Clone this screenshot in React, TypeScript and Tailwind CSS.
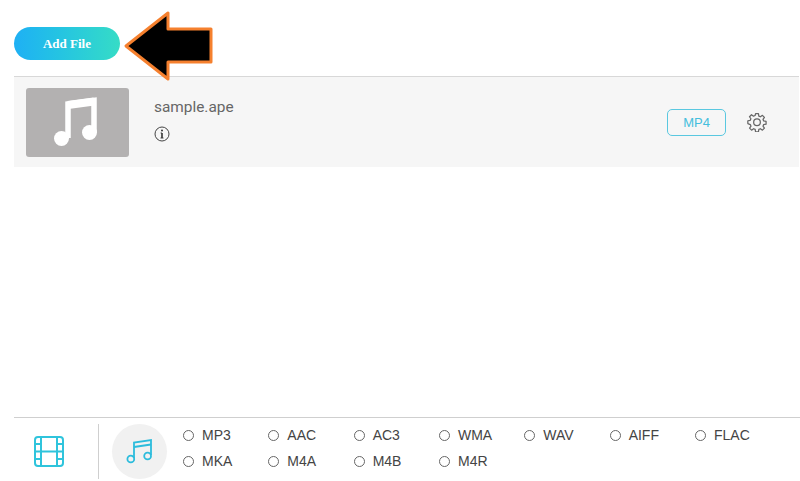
const formats = ['MP3', 'AAC', 'AC3', 'WMA', 'WAV', 'AIFF', 'FLAC', 'MKA', 'M4A', 'M4B', 'M4R'];

function Arrow() {
  return (
    <svg className="absolute left-[120px] top-[8px]" width="100" height="76" viewBox="120 8 100 76">
      <path d="M126 46 L168 13 L168 29 L211 29 L211 62 L168 62 L168 79 Z" fill="#000" stroke="#f5802e" strokeWidth="3" strokeLinejoin="round" />
    </svg>
  );
}

function NoteThumb() {
  return (
    <svg width="50" height="52" viewBox="0 0 50 52" fill="none">
      <path d="M15 42 V8 L41 4.5 V36" stroke="#fff" strokeWidth="5.5" />
      <path d="M15 9 L41 5.5" stroke="#fff" strokeWidth="8" />
      <circle cx="8.5" cy="42.5" r="7.5" fill="#fff" />
      <circle cx="36.5" cy="36.5" r="7.5" fill="#fff" />
    </svg>
  );
}

function InfoIcon() {
  return (
    <svg width="16" height="16" viewBox="0 0 16 16" fill="none">
      <circle cx="8" cy="8" r="7" stroke="#444" strokeWidth="1" />
      <path d="M8 7 V12" stroke="#333" strokeWidth="1.6" />
      <path d="M6.5 12 H9.5 M6.6 7 H8" stroke="#333" strokeWidth="0.9" />
      <circle cx="8" cy="4.6" r="1" fill="#333" />
    </svg>
  );
}

function GearIcon() {
  return (
    <svg width="20" height="20" viewBox="0 0 24 24" fill="none" stroke="#666" strokeWidth="1.5" strokeLinejoin="round">
      <path d="M10.3 2h3.4l.5 2.9 1.9.8 2.4-1.7 2.4 2.4-1.7 2.4.8 1.9 2.9.5v3.4l-2.9.5-.8 1.9 1.7 2.4-2.4 2.4-2.4-1.7-1.9.8-.5 2.9h-3.4l-.5-2.9-1.9-.8-2.4 1.7-2.4-2.4 1.7-2.4-.8-1.9L1 13.9v-3.4l2.9-.5.8-1.9L3 5.7l2.4-2.4 2.4 1.7 1.9-.8z" />
      <circle cx="12" cy="12.2" r="4" />
    </svg>
  );
}

function FilmIcon() {
  return (
    <svg width="30" height="31" viewBox="0 0 30 31" fill="none" stroke="#2fc4dc" strokeWidth="2">
      <rect x="1" y="1" width="28" height="29" rx="3" />
      <path d="M7 1 V30 M23 1 V30 M1 8 H7 M1 15.5 H29 M1 23 H7 M23 8 H29 M23 23 H29" />
    </svg>
  );
}

function NoteOutline() {
  return (
    <svg width="28" height="28" viewBox="0 0 28 28" fill="none" stroke="#2cbcdc" strokeWidth="1.8">
      <path d="M8 20 V4.5 L25 2 V17" />
      <path d="M8 9 L25 6.5" />
      <circle cx="4.8" cy="21" r="3.4" />
      <circle cx="21.6" cy="18" r="3.4" />
    </svg>
  );
}

export default function App() {
  return (
    <div className="relative w-[800px] h-[481px] bg-white overflow-hidden flex flex-col pl-[14px] font-['Liberation_Sans',Arial,sans-serif]">
      <div className="h-[76px] shrink-0 pt-[27px]">
        <button className="w-[106px] h-[33px] rounded-full bg-gradient-to-r from-[#1fb0f4] to-[#36dcc6] text-white text-[13px] font-bold font-['Liberation_Serif',serif]">
          Add File
        </button>
      </div>

      <div className="h-[91px] shrink-0 mr-[1px] border-t border-[#d8d8d8] bg-[#f6f6f6] flex items-center pl-[12px] pr-[32px]">
        <div className="w-[103px] h-[69px] rounded-[3px] bg-[#b3b1b1] flex items-center justify-center">
          <NoteThumb />
        </div>
        <div className="ml-[25px] -mt-[5px] flex flex-col gap-[9px]">
          <span className="text-[15.4px] leading-[20px] text-[#666] font-['Roboto',sans-serif]">sample.ape</span>
          <InfoIcon />
        </div>
        <div className="ml-auto flex items-center gap-[21px]">
          <span className="w-[59px] h-[27px] pt-[1px] rounded-[5px] border border-[#5ac8e0] text-[#45bedd] text-[13px] flex items-center justify-center">MP4</span>
          <GearIcon />
        </div>
      </div>

      <div className="flex-1" />

      <div className="h-[64px] shrink-0 border-t border-[#cfcfcf] flex items-start">
        <div className="w-[85px] shrink-0 border-r border-[#cfcfcf] mt-[6px] h-[55px] pl-[20px] pt-[12px]">
          <FilmIcon />
        </div>
        <div className="ml-[13px] mt-[6px] w-[55px] h-[55px] shrink-0 rounded-full bg-[#f1f1f1] flex items-center justify-center">
          <NoteOutline />
        </div>
        <div className="ml-[16px] mt-[4px] grid grid-cols-[repeat(7,85.33px)] auto-rows-[26px]">
          {formats.map((f) => (
            <label key={f} className="flex items-center h-[26px] text-[14px] text-[#444]">
              <span className="w-[11px] h-[11px] rounded-full border border-[#666] bg-white mr-[8px]" />
              {f}
            </label>
          ))}
        </div>
      </div>

      <Arrow />
    </div>
  );
}
